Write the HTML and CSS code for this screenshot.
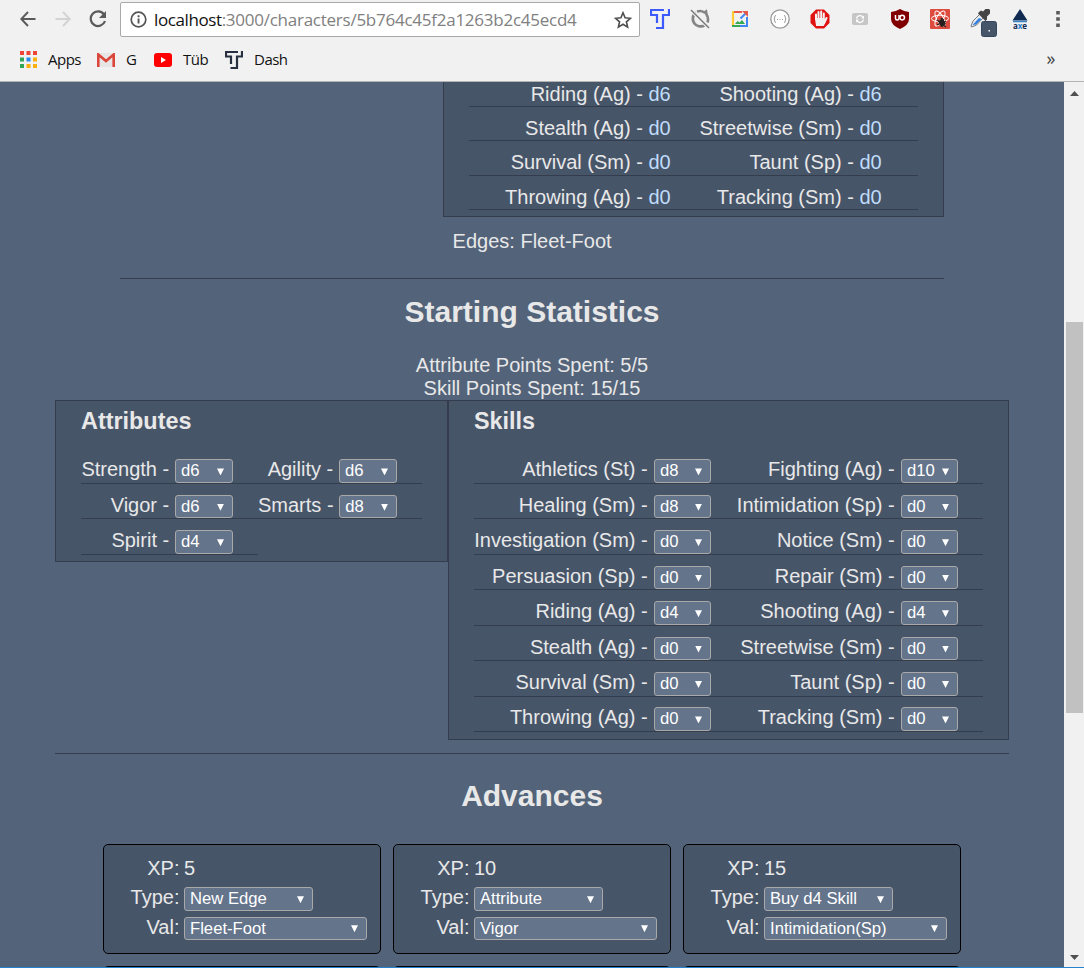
FILE: index.html
```html
<!DOCTYPE html>
<html lang="en">
<head>
<meta charset="utf-8">
<title>Character</title>
<link rel="stylesheet" href="styles.css">
</head>
<body>
<header class="chrome">
  <div class="toolbar">
    <div class="nav">
      <svg width="16" height="16" viewBox="0 0 16 16"><path d="M15.5 8H1.5M8 1 1.3 8 8 15" fill="none" stroke="#5a5a5a" stroke-width="2"/></svg>
      <svg width="16" height="16" viewBox="0 0 16 16"><path d="M.5 8h14M8 1l6.700 7L8 15" fill="none" stroke="#d3d3d3" stroke-width="2"/></svg>
      <svg width="18" height="18" viewBox="0 0 18 18"><path d="M15 4.500A7.300 7.300 0 1 0 16 11" fill="none" stroke="#5a5a5a" stroke-width="2.200"/><path d="M17 1v7h-7z" fill="#5a5a5a"/></svg>
    </div>
    <div class="address">
      <svg width="17" height="17" viewBox="0 0 17 17"><circle cx="8.500" cy="8.500" r="7.300" fill="none" stroke="#555" stroke-width="1.700"/><path d="M7.600 7.500h1.900v5H7.600zM7.600 4.300h1.900v1.900H7.600z" fill="#555"/></svg>
      <span class="url"><b>localhost</b>:3000/characters/5b764c45f2a1263b2c45ecd4</span>
      <svg class="star" width="18" height="18" viewBox="0 0 18 18"><path d="m9 1.800 2.100 5 5.300.500-4 3.500 1.200 5.300L9 13.300l-4.600 2.800 1.200-5.300-4-3.500 5.300-.500z" fill="none" stroke="#4d4d4d" stroke-width="1.600"/></svg>
    </div>
    <div class="extensions">
      <svg width="20" height="20" viewBox="0 0 20 20"><path d="M0 1h14M1 0v6h6v8M19 0v6h-6v13H6" fill="none" stroke="#3d5afe" stroke-width="2.200"/></svg>
      <svg width="20" height="20" viewBox="0 0 20 20"><path d="M6 3.500A7.500 7.500 0 1 0 15 16" fill="none" stroke="#858585" stroke-width="2.800"/><path d="M7 2.500q4-1.500 7.500 1l1.500-1 .5 3q2.500 3.500 1 8" fill="none" stroke="#858585" stroke-width="2.600"/><path d="m1 1 18 18" stroke="#f1f1f1" stroke-width="3.600"/><path d="m1 1 18 18" stroke="#777" stroke-width="1.500"/></svg>
      <svg width="20" height="20" viewBox="0 0 20 20"><path d="M3 3h9" fill="none" stroke="#e8584a" stroke-width="2"/><path d="M3 2v15" stroke="#fbca35" stroke-width="2.200"/><path d="M2 17h9" stroke="#34a853" stroke-width="2"/><path d="M10 17h7V8" fill="none" stroke="#4285f4" stroke-width="2"/><path d="m10.500 9.500 6-6" stroke="#4285f4" stroke-width="2"/><path d="M12 2h6v6z" fill="#e8584a"/><path d="m5 15 2.500-3 2 1.500L12 11l3 4z" fill="#34a853"/></svg>
      <svg width="20" height="20" viewBox="0 0 20 20"><circle cx="10" cy="10" r="9.200" fill="#fff" stroke="#999" stroke-width="1.300"/><path d="M6 6.500q-1.300 0-1.300 1.300V9L4 10l.7 1v1.200q0 1.300 1.300 1.300M14 6.500q1.300 0 1.300 1.300V9l.7 1-.7 1v1.200q0 1.300-1.300 1.300" fill="none" stroke="#999"/><path d="M7 10.500h1m1.500 0h1m1.500 0h1" stroke="#999" stroke-width="1.200"/></svg>
      <svg width="20" height="20" viewBox="0 0 20 20"><path d="M6 .500h8L19.500 6v8L14 19.500H6L.500 14V6z" fill="#e01212"/><path d="M6 11V5.500m2.500 5V3m2.700 7.500V2.500m2.600 8V4.500M6 10l1 6h6l1.500-2.500L16.500 9" fill="none" stroke="#f4f4f4" stroke-width="2" stroke-linecap="round"/><path d="M6 9h8v5l-2 3H8l-2-3z" fill="#f0f0f0"/></svg>
      <svg width="20" height="20" viewBox="0 0 20 20"><rect x="2" y="4" width="16" height="12" rx="2" fill="#c6c6c6"/><path d="M6.500 9.500A3.500 3.500 0 0 1 13 8.500m.5 2A3.500 3.500 0 0 1 7 11.700" fill="none" stroke="#fff" stroke-width="1.300"/><path d="M14 6.500v3h-3zM6 13.500v-3h3z" fill="#fff"/></svg>
      <svg width="20" height="20" viewBox="0 0 20 20"><path d="M10 0q4 2.500 9 3v7q0 6-9 10-9-4-9-10V3q5-.5 9-3" fill="#800000"/><path d="M5.500 6v3.500q0 1.500 1.700 1.500T9 9.500V6" fill="none" stroke="#fff" stroke-width="1.500"/><circle cx="12.200" cy="8.600" r="2.300" fill="none" stroke="#fff" stroke-width="1.500"/></svg>
      <svg width="20" height="20" viewBox="0 0 20 20"><rect width="20" height="20" rx="1" fill="#dd4b3e"/><g fill="none" stroke="#fff" stroke-width="1"><ellipse cx="10" cy="9.500" rx="8.500" ry="3.300"/><ellipse cx="10" cy="9.500" rx="8.500" ry="3.300" transform="rotate(60 10 9.500)"/><ellipse cx="10" cy="9.500" rx="8.500" ry="3.300" transform="rotate(120 10 9.500)"/></g><path d="m8 12 5-2 3 5-5 3z" fill="#28201f"/><path d="m7 11 9 7m-9-2 9-4m-5-3 2 9m-2-9 3 2" stroke="#28201f" stroke-width="1.200"/></svg>
      <svg class="dropper" width="28" height="30" viewBox="0 0 28 30"><path d="m1 17 2-5 8-8 3.500 3.500-8 8.500-5 2z" fill="#e9edf2" stroke="#70777d"/><path d="m2.500 16 6.500-7 2.500 1-5.500 5.500z" fill="#2e7de0"/><path d="m9 3 2-1.500 2 1L15.500 0H19l1 1v3.500L17 7.500v3L15.500 12 8 4.500z" fill="#454545"/><rect x="11.500" y="12.500" width="15" height="15" rx="2" fill="#475569" stroke="#34475f"/><path d="M18.500 21h1.500v1.500h-1.500z" fill="#fff"/></svg>
      <svg class="axe" width="20" height="22" viewBox="0 0 20 22"><path d="m10 0 7.500 11.500h-15z" fill="#102a52"/><path d="M3 12.500h14" stroke="#3585c7" stroke-width="1.500"/><text x="10" y="19.500" text-anchor="middle" class="axe-text">a<tspan fill="#2680cd">x</tspan>e</text></svg>
      <svg class="more" width="6" height="20" viewBox="0 0 6 20"><path d="M1.200 2h3.600v3.500H1.200zM1.200 8.300h3.600v3.500H1.200zM1.200 14.600h3.600v3.500H1.200z" fill="#5a5a5a"/></svg>
    </div>
  </div>
  <nav class="bookmarks">
    <svg width="17" height="17" viewBox="0 0 17 17"><path d="M0 0h4v4H0zM6.500 0h4v4h-4zM13 0h4v4h-4z" fill="#f04437"/><path d="M0 6.500h4v4H0zM0 13h4v4H0z" fill="#2fa655"/><path d="M6.500 6.500h4v4h-4z" fill="#2788ee"/><path d="M13 6.500h4v4h-4zM6.500 13h4v4h-4zM13 13h4v4h-4z" fill="#fbb00e"/></svg>
    <span class="bm-apps">Apps</span>
    <svg width="18" height="14" viewBox="0 0 18 14"><path d="M0 0h18v14H0z" fill="#e6e6e6"/><path d="M1.300 14V1.500L9 8l7.700-6.500V14" fill="none" stroke="#dc4539" stroke-width="2.600"/></svg>
    <span class="bm-g">G</span>
    <svg width="18" height="14" viewBox="0 0 18 14"><rect width="18" height="14" rx="3" fill="#f00"/><path d="m7 4 5 3-5 3z" fill="#fff"/></svg>
    <span class="bm-tub">Tüb</span>
    <svg width="18" height="18" viewBox="0 0 18 18"><path d="M0 1h13M1 0v5.500h5V13M17 0v5.500h-5V17H5.500" fill="none" stroke="#263040" stroke-width="2.200"/></svg>
    <span class="bm-dash">Dash</span>
    <span class="overflow">»</span>
  </nav>
</header>
<div class="viewport">
  <main class="page">
    <section class="panel current">
      <div class="row"><div class="cell">Riding (Ag) - <i>d6</i></div><div class="cell">Shooting (Ag) - <i>d6</i></div></div>
      <div class="row"><div class="cell">Stealth (Ag) - <i>d0</i></div><div class="cell">Streetwise (Sm) - <i>d0</i></div></div>
      <div class="row"><div class="cell">Survival (Sm) - <i>d0</i></div><div class="cell">Taunt (Sp) - <i>d0</i></div></div>
      <div class="row"><div class="cell">Throwing (Ag) - <i>d0</i></div><div class="cell">Tracking (Sm) - <i>d0</i></div></div>
    </section>
    <p class="edges">Edges: Fleet-Foot</p>
    <hr class="rule rule-short">
    <h2 class="title">Starting Statistics</h2>
    <p class="points">Attribute Points Spent: 5/5<br>Skill Points Spent: 15/15</p>
    <div class="stats">
      <section class="panel attributes">
        <h3>Attributes</h3>
        <div class="row"><div class="cell">Strength -<span class="select">d6</span></div><div class="cell">Agility -<span class="select">d6</span></div></div>
        <div class="row"><div class="cell">Vigor -<span class="select">d6</span></div><div class="cell">Smarts -<span class="select">d8</span></div></div>
        <div class="row single"><div class="cell">Spirit -<span class="select">d4</span></div></div>
      </section>
      <section class="panel skills">
        <h3>Skills</h3>
        <div class="row"><div class="cell">Athletics (St) -<span class="select">d8</span></div><div class="cell">Fighting (Ag) -<span class="select">d10</span></div></div>
        <div class="row"><div class="cell">Healing (Sm) -<span class="select">d8</span></div><div class="cell">Intimidation (Sp) -<span class="select">d0</span></div></div>
        <div class="row"><div class="cell">Investigation (Sm) -<span class="select">d0</span></div><div class="cell">Notice (Sm) -<span class="select">d0</span></div></div>
        <div class="row"><div class="cell">Persuasion (Sp) -<span class="select">d0</span></div><div class="cell">Repair (Sm) -<span class="select">d0</span></div></div>
        <div class="row"><div class="cell">Riding (Ag) -<span class="select">d4</span></div><div class="cell">Shooting (Ag) -<span class="select">d4</span></div></div>
        <div class="row"><div class="cell">Stealth (Ag) -<span class="select">d0</span></div><div class="cell">Streetwise (Sm) -<span class="select">d0</span></div></div>
        <div class="row"><div class="cell">Survival (Sm) -<span class="select">d0</span></div><div class="cell">Taunt (Sp) -<span class="select">d0</span></div></div>
        <div class="row"><div class="cell">Throwing (Ag) -<span class="select">d0</span></div><div class="cell">Tracking (Sm) -<span class="select">d0</span></div></div>
      </section>
    </div>
    <hr class="rule rule-wide">
    <h2 class="title advances-title">Advances</h2>
    <div class="cards">
      <article class="card">
        <span class="key xp">XP:</span><span class="xp">5</span>
        <span class="key">Type:</span><span class="select type">New Edge</span>
        <span class="key">Val:</span><span class="select val">Fleet-Foot</span>
      </article>
      <article class="card">
        <span class="key xp">XP:</span><span class="xp">10</span>
        <span class="key">Type:</span><span class="select type">Attribute</span>
        <span class="key">Val:</span><span class="select val">Vigor</span>
      </article>
      <article class="card">
        <span class="key xp">XP:</span><span class="xp">15</span>
        <span class="key">Type:</span><span class="select type">Buy d4 Skill</span>
        <span class="key">Val:</span><span class="select val">Intimidation(Sp)</span>
      </article>
      <article class="card"></article>
      <article class="card"></article>
      <article class="card"></article>
    </div>
  </main>
  <div class="scrollbar">
    <svg width="9" height="5" viewBox="0 0 9 5"><path d="M0 5 4.500 0 9 5z" fill="#505050"/></svg>
    <div class="thumb"></div>
    <svg width="9" height="5" viewBox="0 0 9 5"><path d="M0 0h9L4.500 5z" fill="#505050"/></svg>
  </div>
</div>
<div class="window-edge"></div>
</body>
</html>
```
FILE: styles.css
```css
* { box-sizing: border-box; }
body {
  margin: 0;
  width: 1084px;
  height: 968px;
  overflow: hidden;
  display: flex;
  flex-direction: column;
  background: #536379;
  color: #e8e8e8;
  font: 20px/23px "Liberation Sans", Arial, sans-serif;
}
svg { display: block; flex: none; }
p, h2, h3 { margin: 0; }

/* browser chrome */
.chrome {
  flex: none;
  height: 82px;
  background: #f1f1f1;
  border-bottom: 1px solid #b3b3b3;
  color: #111;
  font-family: "Open Sans", "Noto Sans", sans-serif;
}
.toolbar { display: flex; height: 38px; padding-top: 2px; }
.nav {
  width: 120px;
  display: flex;
  align-items: center;
  gap: 19px;
  padding-left: 20px;
  height: 34px;
}
.nav svg:last-child { margin-left: -1px; }
.address {
  width: 520px;
  height: 35px;
  border: 1px solid #a9a9a9;
  border-radius: 2px;
  background: #fff;
  display: flex;
  align-items: center;
  padding: 0 7px 0 9px;
}
.url {
  margin-left: 7px;
  font-size: 17px;
  letter-spacing: -0.25px;
  color: #808080;
  white-space: nowrap;
}
.url b { font-weight: 400; color: #111; letter-spacing: -0.4px; }
.star { margin-left: auto; }
.extensions {
  display: flex;
  gap: 20px;
  padding: 7px 0 0 10px;
}
.dropper { margin-right: -8px; }
.more { margin-left: 5px; }
.axe-text { font: bold 8px "Open Sans", sans-serif; fill: #102a52; }
.bookmarks {
  display: flex;
  align-items: center;
  height: 43px;
  padding-left: 20px;
  font-size: 15px;
  letter-spacing: -0.5px;
  line-height: 20px;
}
.bookmarks span { flex: none; padding-bottom: 2px; }
.bm-apps { width: 49px; margin-left: 11px; }
.bm-g { width: 28px; margin-left: 11px; }
.bm-tub { width: 42px; margin-left: 11px; }
.bm-dash { margin-left: 11px; }
.bookmarks .overflow { margin-left: auto; margin-right: 29px; padding-bottom: 4px; font-size: 18px; color: #444; }

/* page */
.viewport { flex: 1; min-height: 0; display: flex; overflow: hidden; }
.page { width: 1064px; flex: none; }
.panel { background: #475569; border: 1px solid #333d4d; }
.row {
  display: grid;
  border-bottom: 1px solid #333d4d;
  align-items: end;
}
.cell {
  display: flex;
  justify-content: flex-end;
  align-items: flex-end;
  white-space: pre;
}
.current {
  width: 501px;
  margin-left: 443px;
  border-top: 0;
  padding: 0 25px 6px;
}
.current .row { grid-template-columns: 238px 211px; height: 34.4px; }
.current .row:first-child { height: 25px; }
.current .cell { padding-right: 36.3px; line-height: 23.6px; }
.current .row:first-child .cell { line-height: 23px; }
.current i { font-style: normal; color: #bfdcfa; }
.edges { margin: 13px 0 25px 452.600px; }
.rule { border: 0; height: 1px; background: #333d4d; margin: 0; }
.rule-short { width: 824px; margin-left: 120px; }
.rule-wide { width: 954px; margin: 13px 0 0 55px; }
.title { font-size: 30px; line-height: 34px; text-align: center; margin-top: 16px; }
.points { text-align: center; margin-top: 25px; }
.stats { display: flex; align-items: flex-start; margin-left: 55px; }
.attributes { width: 393px; height: 162px; }
.skills { width: 561px; height: 340px; }
.stats .panel { padding: 7px 25px 0; }
h3 { font-size: 23.4px; line-height: 27px; margin-bottom: 13.4px; }
.stats .row { height: 35.45px; }
.attributes .row { grid-template-columns: 177px 164px; width: 341px; }
.attributes .single { width: 177px; }
.attributes .select { width: 58px; }
.skills .row { grid-template-columns: 262px 247px; }
.stats .cell { padding-right: 25px; line-height: 26.6px; }
.select {
  position: relative;
  width: 57.5px;
  height: 23.6px;
  margin-left: 5.8px;
  padding-left: 5px;
  border: 1px solid #a9a9a9;
  border-radius: 3px;
  background: #64748b;
  color: #fff;
  font-size: 16.67px;
  line-height: 22px;
}
.stats .select { line-height: 21.6px; }
.skills .select { padding-left: 5.4px; }
.select::after {
  content: "";
  position: absolute;
  right: 8px;
  top: 8px;
  width: 7px;
  height: 7px;
  background: #fff;
  clip-path: polygon(0 0, 100% 0, 50% 100%);
}
.advances-title { margin-top: 25px; }
.cards {
  display: grid;
  grid-template-columns: repeat(3, 278px);
  grid-auto-rows: 110px;
  gap: 12px;
  margin: 31px 0 0 103px;
}
.card {
  background: #475569;
  border: 1px solid #000;
  border-radius: 5px;
  padding-top: 12px;
  display: grid;
  grid-template-columns: 75.5px 1fr;
  grid-template-rows: 30px 30px 30px;
  column-gap: 4.5px;
}
.key { text-align: right; line-height: 21px; }
.card .xp { line-height: 23px; }
.card .select { margin: 0; }
.card .type { width: 129px; height: 24px; }
.card .val { width: 183px; height: 23px; }
.card .val::after { top: 7px; }

/* scrollbar */
.scrollbar {
  width: 20px;
  background: #f1f1f1;
  display: flex;
  flex-direction: column;
  justify-content: space-between;
  align-items: center;
  padding: 9px 0 8px;
}
.thumb { width: 17px; height: 391px; background: #c1c1c1; margin: 226px 0 242px; flex: none; }
.window-edge { height: 1px; flex: none; background: #2683cf; }
```
